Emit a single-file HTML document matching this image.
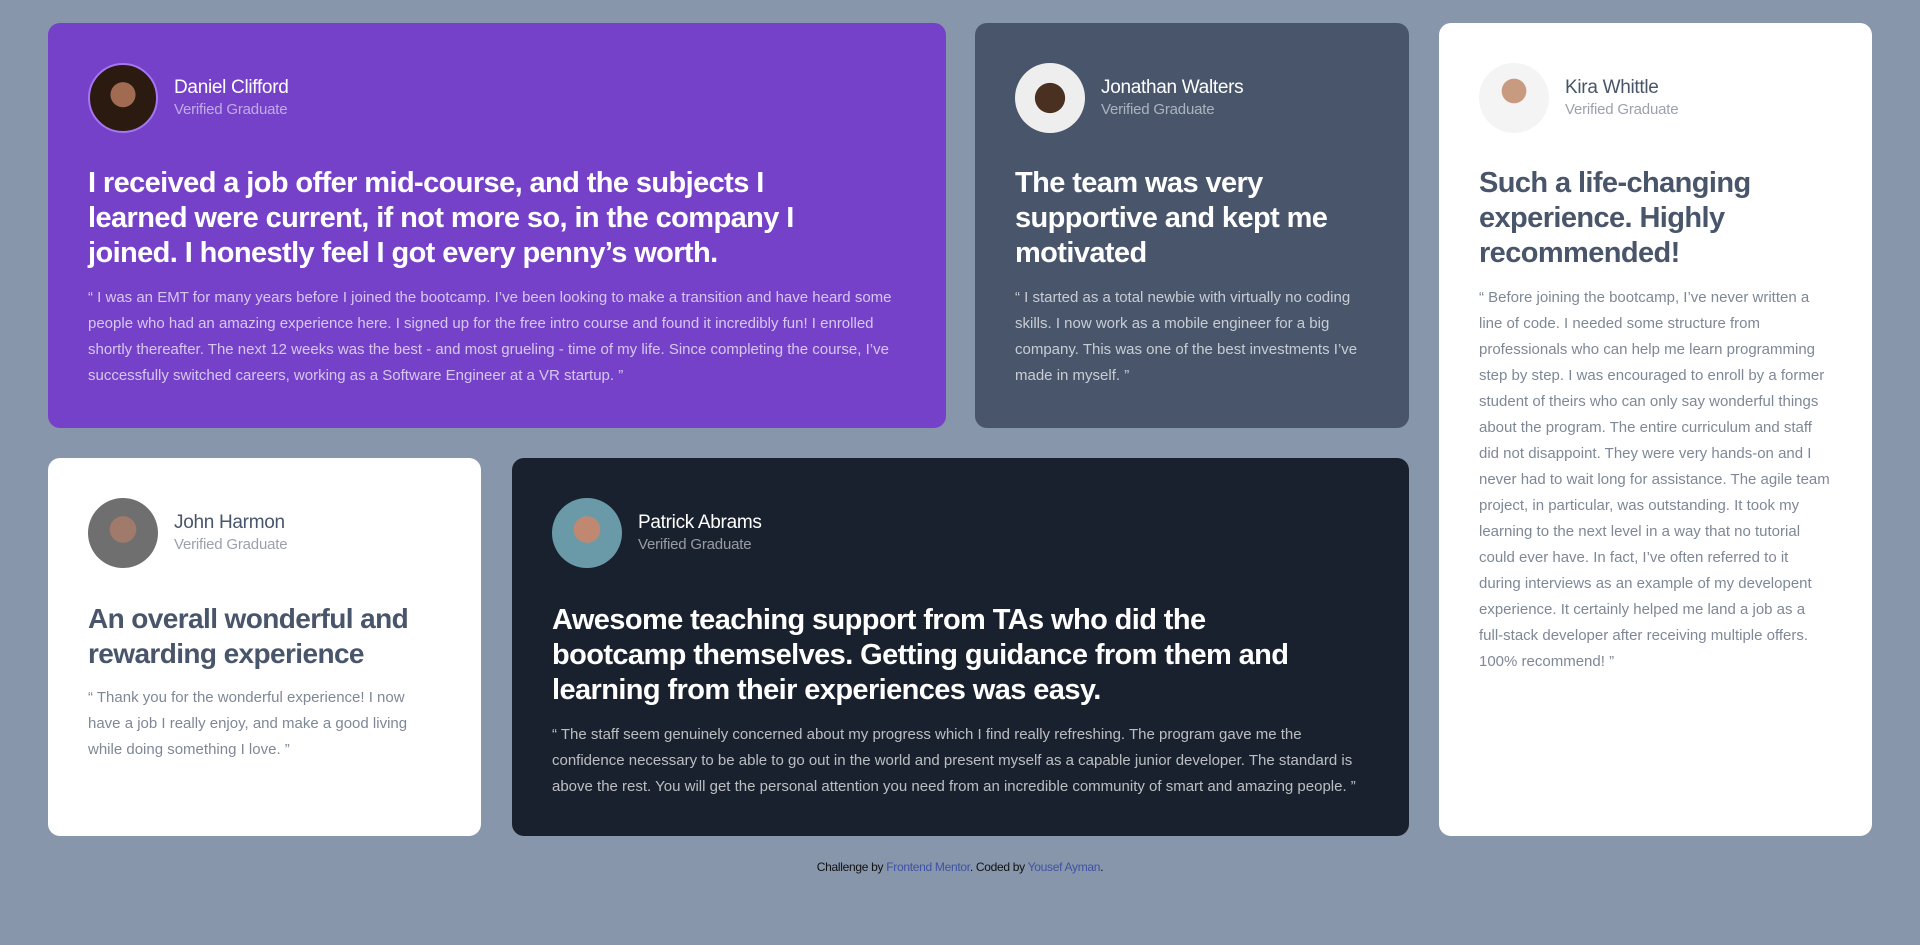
<!DOCTYPE html>
<html><head><meta charset="utf-8"><style>
*{box-sizing:border-box;margin:0;padding:0}
body{width:1920px;height:945px;background:#8796ab;font-family:"Liberation Sans",sans-serif;position:relative;overflow:hidden}
.c{position:absolute;border-radius:12px;padding:40px 40px 40px 40px}
.h{display:flex;align-items:center}
.av{width:70px;height:70px;border-radius:50%;margin-right:16px;flex:none}
.n{font-size:19px;line-height:24px;letter-spacing:-0.3px}
.v{font-size:15px;line-height:20px;opacity:.55;letter-spacing:-0.2px}
h2{font-size:29px;line-height:35px;font-weight:bold;margin-top:33px;letter-spacing:-0.6px}
p{font-size:15px;line-height:26px;margin-top:14px;opacity:.7;letter-spacing:0}
.w{color:#48556a;background:#fff}.w .v{color:#48556a}.w p{color:#48556a}
.l{color:#fff}
</style></head><body>
<div class="c l" style="left:48px;top:23px;width:898px;height:405px;background:#7541c8">
<div class="h"><div class="av" style="background:radial-gradient(circle at 50% 45%,#a06b50 0 25%,#2a1a10 26% 100%);border:2px solid #a775f1"></div><div><div class="n">Daniel Clifford</div><div class="v">Verified Graduate</div></div></div>
<h2 style="max-width:770px">I received a job offer mid-course, and the subjects I learned were current, if not more so, in the company I joined. I honestly feel I got every penny’s worth.</h2>
<p>“ I was an EMT for many years before I joined the bootcamp. I’ve been looking to make a transition and have heard some people who had an amazing experience here. I signed up for the free intro course and found it incredibly fun! I enrolled shortly thereafter. The next 12 weeks was the best - and most grueling - time of my life. Since completing the course, I’ve successfully switched careers, working as a Software Engineer at a VR startup. ”</p>
</div>
<div class="c l" style="left:975px;top:23px;width:434px;height:405px;background:#48556a">
<div class="h"><div class="av" style="background:radial-gradient(circle at 50% 50%,#4a3020 0 30%,#eee 31%)"></div><div><div class="n">Jonathan Walters</div><div class="v">Verified Graduate</div></div></div>
<h2>The team was very supportive and kept me motivated</h2>
<p>“ I started as a total newbie with virtually no coding skills. I now work as a mobile engineer for a big company. This was one of the best investments I’ve made in myself. ”</p>
</div>
<div class="c w" style="left:1439px;top:23px;width:433px;height:813px">
<div class="h"><div class="av" style="background:radial-gradient(circle at 50% 40%,#c89a80 0 22%,#f4f4f4 23%)"></div><div><div class="n">Kira Whittle</div><div class="v">Verified Graduate</div></div></div>
<h2>Such a life-changing experience. Highly recommended!</h2>
<p>“ Before joining the bootcamp, I’ve never written a line of code. I needed some structure from professionals who can help me learn programming step by step. I was encouraged to enroll by a former student of theirs who can only say wonderful things about the program. The entire curriculum and staff did not disappoint. They were very hands-on and I never had to wait long for assistance. The agile team project, in particular, was outstanding. It took my learning to the next level in a way that no tutorial could ever have. In fact, I’ve often referred to it during interviews as an example of my developent experience. It certainly helped me land a job as a full-stack developer after receiving multiple offers. 100% recommend! ”</p>
</div>
<div class="c w" style="left:48px;top:458px;width:433px;height:378px">
<div class="h"><div class="av" style="background:radial-gradient(circle at 50% 45%,#a07a6a 0 25%,#6f6f6f 26%)"></div><div><div class="n">John Harmon</div><div class="v">Verified Graduate</div></div></div>
<h2 style="font-size:28px">An overall wonderful and rewarding experience</h2>
<p>“ Thank you for the wonderful experience! I now have a job I really enjoy, and make a good living while doing something I love. ”</p>
</div>
<div class="c l" style="left:512px;top:458px;width:897px;height:378px;background:#19212e">
<div class="h"><div class="av" style="background:radial-gradient(circle at 50% 45%,#c08870 0 25%,#6a9aa8 26%)"></div><div><div class="n">Patrick Abrams</div><div class="v">Verified Graduate</div></div></div>
<h2 style="margin-top:35px;max-width:790px">Awesome teaching support from TAs who did the bootcamp themselves. Getting guidance from them and learning from their experiences was easy.</h2>
<p>“ The staff seem genuinely concerned about my progress which I find really refreshing. The program gave me the confidence necessary to be able to go out in the world and present myself as a capable junior developer. The standard is above the rest. You will get the personal attention you need from an incredible community of smart and amazing people. ”</p>
</div>
<div style="position:absolute;left:0;width:1920px;top:860px;text-align:center;font-size:12px;color:#111;letter-spacing:-0.3px">Challenge by <span style="color:#3e52a3">Frontend Mentor</span>. Coded by <span style="color:#3e52a3">Yousef Ayman</span>.</div>
</body></html>
